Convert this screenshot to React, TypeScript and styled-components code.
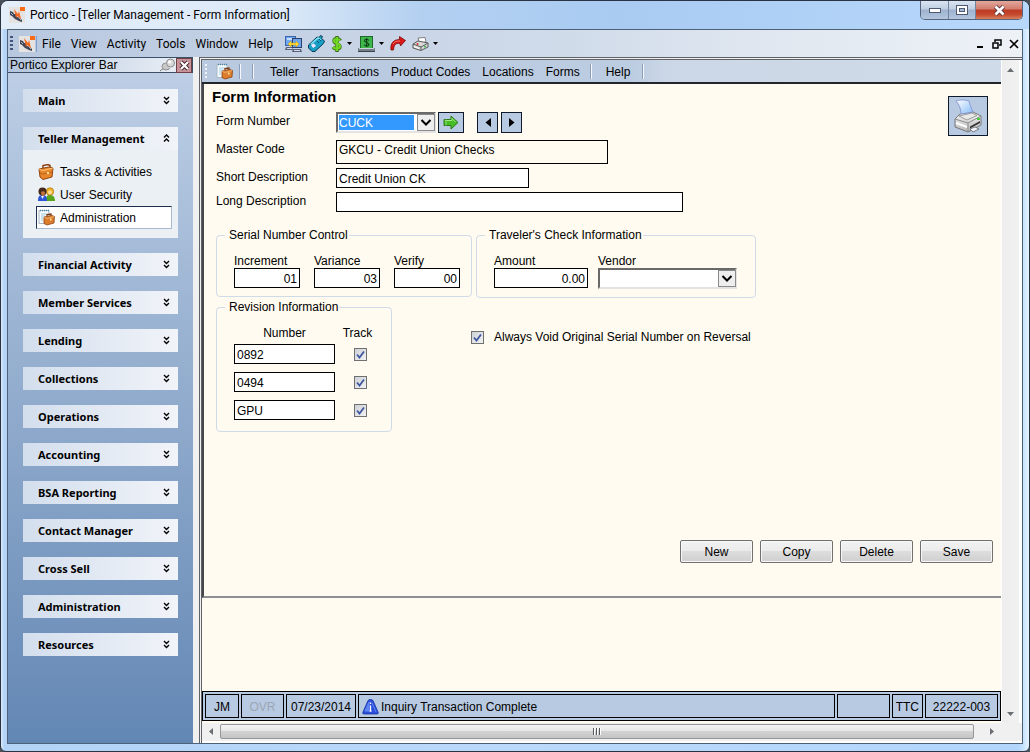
import React from "react";
import styled, { createGlobalStyle, css } from "styled-components";

const sans = '"Liberation Sans", Arial, sans-serif';
const ui = 'Roboto, "Segoe UI", sans-serif';
const panelBlue = "#b8cae1";
const cream = "#fffbf0";

const Global = createGlobalStyle`
  *, *::before, *::after { box-sizing: border-box; }
  html, body { margin: 0; background: #4a5058; }
  button, input, select { font: inherit; color: inherit; margin: 0; }
  button { padding: 0; cursor: default; }
`;

/* ---------- window frame ---------- */

const WindowFrame = styled.div`
  display: flex;
  flex-direction: column;
  min-height: 100vh;
  padding: 0 6px 7px;
  border: 1px solid #2a3340;
  border-radius: 8px 8px 6px 6px;
  background: linear-gradient(90deg, #dcebfb, #b3d3f7 3px, #bad9fb 50%, #b3d6fd 99%, #e4f3ff);
  color: #000;
  font: 12px/16px ${sans};
`;

const TitleBar = styled.header`
  display: flex;
  align-items: flex-start;
  height: 28px;
  margin: 0 -6px;
  padding: 0 6px 0 8px;
  border-radius: 7px 7px 0 0;
  background: linear-gradient(90deg, #e4eef9 0, #dce9f8 280px, #b3d0f1 420px, #a9cbf2 60%, #b8d8fb);
`;

const AppTitle = styled.h1`
  display: flex;
  flex: 1;
  align-items: center;
  gap: 5px;
  margin: 0;
  padding-top: 5px;
  font: 12px/18px ${ui};
`;

const WindowButtons = styled.div`
  display: flex;
  border: 1px solid #54657c;
  border-top: 0;
  border-radius: 0 0 5px 5px;
  overflow: hidden;
`;

const WindowButton = styled.button<{ $close?: boolean }>`
  display: grid;
  place-items: center;
  width: ${(p) => (p.$close ? 47 : 27)}px;
  height: 18px;
  border: 0;
  border-left: 1px solid #7184a0;
  background: ${(p) =>
    p.$close
      ? "linear-gradient(#e2a79c, #d17c6d 45%, #bd3b22 50%, #c4492e 75%, #d9805f)"
      : "linear-gradient(#dbe5f2, #bfcee2 45%, #9db2cf 50%, #b4c6de)"};
  &:first-child { border-left: 0; }
`;

const ClientArea = styled.div`
  display: flex;
  flex: 1;
  flex-direction: column;
  border: 1px solid #4c6078;
  background: #f0f0f0;
`;

/* ---------- main menu ---------- */

const MenuBar = styled.nav`
  display: flex;
  align-items: center;
  height: 27px;
  padding: 0 3px 0 2px;
  background: linear-gradient(90deg, #b8c8df, #d0dbea 55%, #e0e7f0 75%, #eef2f7);
  font: 12px/18px ${ui};
`;

const Grip = styled.span`
  width: 3px;
  height: 15px;
  background: repeating-linear-gradient(#40547c 0 2px, transparent 2px 4px);
`;

const MenuLogo = styled.span`
  display: flex;
  margin: 0 5px 0 6px;
  padding-right: 1px;
  border-right: 1px solid #7c9fd0;
`;

const MenuItems = styled.div`
  display: flex;
  gap: 10px;
  margin-right: 12px;
`;

const FlatButton = styled.button`
  display: flex;
  align-items: center;
  gap: 4px;
  border: 0;
  background: none;
`;

const ToolIcons = styled.div`
  display: flex;
  flex: 1;
  align-items: center;
  gap: 6px;
`;

const ChildControls = styled.div`
  display: flex;
  gap: 7px;
`;

/* ---------- explorer bar ---------- */

const Workspace = styled.div`
  display: flex;
  flex: 1;
  gap: 6px;
`;

const Explorer = styled.aside`
  display: flex;
  flex: 0 0 185px;
  flex-direction: column;
  background: linear-gradient(#bfd0e6, #6387b4);
`;

const ExplorerHeader = styled.div`
  display: flex;
  align-items: center;
  height: 16px;
  padding-left: 2px;
  border: 1px solid #3c5068;
  border-width: 1px 1px 1px 0;
  background: linear-gradient(90deg, #b3c5dd, #edf1f7);
`;

const ExplorerTitle = styled.h2`
  flex: 1;
  margin: 0;
  font: 12px/14px ${sans};
`;

const PanelClose = styled.button`
  display: grid;
  place-items: center;
  width: 16px;
  height: 15px;
  border: 1px solid #704048;
  background: #c79298;
`;

const Groups = styled.div`
  display: flex;
  flex-direction: column;
  gap: 15px;
  padding: 16px 15px;
`;

const GroupHeader = styled.button`
  display: flex;
  align-items: center;
  justify-content: space-between;
  width: 100%;
  height: 23px;
  padding: 0 8px 0 15px;
  border: 0;
  background: linear-gradient(90deg, #d3deed, #f1f4f9);
  font: bold 11px/23px "Noto Sans", Tahoma, sans-serif;
`;

const GroupBody = styled.div`
  padding: 10px 6px 9px 13px;
  background: #ebf0f5;
`;

const GroupLink = styled.a<{ $current?: boolean }>`
  display: flex;
  align-items: center;
  gap: 5px;
  height: 23px;
  padding-left: 1px;
  border: 1px solid transparent;
  color: #000;
  text-decoration: none;
  ${(p) =>
    p.$current &&
    css`
      border-color: #1c2f4c #a9b9d0 #a9b9d0 #1c2f4c;
      background: #fff;
    `}
`;

/* ---------- document ---------- */

const Mdi = styled.main`
  display: flex;
  flex: 1;
  min-width: 0;
  flex-direction: column;
  border: 3px double #5f6266;
  border-width: 3px 0 0 3px;
  background: #f0f0f0;
`;

const MdiMain = styled.div`
  display: flex;
  flex: 1;
`;

const Document = styled.div`
  display: flex;
  flex: 1;
  min-width: 0;
  flex-direction: column;
  background: ${cream};
`;

const DocToolbar = styled.nav`
  display: flex;
  align-items: center;
  height: 24px;
  padding: 1px 0 0 3px;
  border-bottom: 2px solid #22262c;
  background: linear-gradient(90deg, #b8c9e0, #bccce1 54%, #cbd7e6 58%, #d0dbe9);
`;

const DocGrip = styled.span`
  width: 2px;
  height: 15px;
  margin-right: 9px;
  background: repeating-linear-gradient(#eef3fa 0 2px, transparent 2px 4px);
`;

const Separator = styled.span`
  width: 2px;
  height: 15px;
  border-left: 1px solid #8b9db8;
  background: #f5f7fa;
`;

const DocIcon = styled.span`
  display: flex;
  margin-right: 6px;
`;

const DocMenu = styled.div<{ $tail?: boolean }>`
  display: flex;
  gap: 12px;
  margin: ${(p) => (p.$tail ? "0 12px 0 14px" : "0 10px 0 16px")};
`;

const SeparatorPair = styled.span`
  display: flex;
  gap: 11px;
`;

const FormPane = styled.form`
  display: flex;
  flex: 0 0 auto;
  flex-direction: column;
  padding: 0 8px 0 12px;
  border-left: 2px solid #44474c;
  border-bottom: 2px solid #8f9094;
`;

const FormTop = styled.div`
  display: flex;
  align-items: flex-start;
  justify-content: space-between;
  padding-right: 5px;
`;

const FormTitle = styled.h2`
  margin: 0 0 6px -4px;
  padding-top: 4px;
  font: bold 15px/18px ${sans};
`;

const Fields = styled.div`
  display: grid;
  grid-template-columns: 120px 1fr;
  row-gap: 4px;
`;

const FieldLabel = styled.label`
  line-height: 18px;
`;

const Pickers = styled.div`
  display: flex;
  gap: 2px;
  padding-bottom: 3px;
`;

const TextBox = styled.input<{ $w: number; $right?: boolean; $memo?: boolean }>`
  display: block;
  width: ${(p) => p.$w}px;
  height: ${(p) => (p.$memo ? 24 : 20)}px;
  padding: ${(p) => (p.$memo ? "0 2px 4px" : "2px 2px 0")};
  border: 1px solid #000;
  border-radius: 0;
  background: ${(p) => (p.$memo ? cream : "#fff")};
  text-align: ${(p) => (p.$right ? "right" : "left")};
`;

const SelectWrap = styled.span<{ $w: number }>`
  position: relative;
  display: block;
  width: ${(p) => p.$w}px;
  svg {
    position: absolute;
    top: 2px;
    right: 1px;
    pointer-events: none;
  }
`;

const SelectBox = styled.select<{ $active?: boolean }>`
  appearance: none;
  display: block;
  width: 100%;
  height: 21px;
  padding: 1px 20px 1px 1px;
  border: 2px solid;
  border-color: #696969 #e3e3e3 #e3e3e3 #696969;
  border-radius: 0;
  background: #fff;
  ${(p) =>
    p.$active &&
    css`
      color: #fff;
      background: linear-gradient(#3399ff, #3399ff) content-box, #fff;
    `}
`;

const IconButton = styled.button<{ $w: number; $h?: number }>`
  display: grid;
  place-items: center;
  width: ${(p) => p.$w}px;
  height: ${(p) => p.$h ?? 21}px;
  border: 1px solid #10182c;
  background: ${panelBlue};
`;

const StepButtons = styled.div`
  display: flex;
  gap: 3px;
  margin-left: 11px;
`;

const PrintButton = styled(IconButton)`
  margin-top: 12px;
`;

const BoxRow = styled.div<{ $first?: boolean }>`
  display: flex;
  align-items: flex-start;
  gap: 4px;
  margin-top: ${(p) => (p.$first ? 15 : 1)}px;
`;

const Box = styled.fieldset<{ $w: number; $bottom: number }>`
  width: ${(p) => p.$w}px;
  margin: 0;
  padding: 12px 0 ${(p) => p.$bottom}px 17px;
  border: 1px solid #d0dbe8;
  border-radius: 4px;
`;

const Legend = styled.legend`
  margin-left: -9px;
  padding: 0 1px 0 4px;
`;

const Columns = styled.div`
  display: flex;
  gap: 11px;
`;

const Column = styled.label<{ $w: number }>`
  display: block;
  width: ${(p) => p.$w}px;
  line-height: 13px;
`;

const CounterColumn = styled(Column)`
  margin-right: 4px;
`;

const RevisionTable = styled.table`
  border-collapse: collapse;
  th {
    padding: 0 0 5px;
    font-weight: normal;
    line-height: 12px;
  }
  td { padding: 0 0 8px; }
  td + td { padding-left: 19px; }
  th + th { width: 45px; }
`;

const CheckWrap = styled.span`
  position: relative;
  display: block;
  width: 13px;
  height: 13px;
  svg {
    position: absolute;
    top: 0;
    left: 0;
    pointer-events: none;
  }
`;

const CheckInput = styled.input`
  appearance: none;
  display: block;
  width: 13px;
  height: 13px;
  border: 1px solid #707070;
  background: linear-gradient(135deg, #cdd0d6, #f3f3f3);
`;

const VoidOption = styled.label`
  display: flex;
  align-items: center;
  gap: 10px;
  margin: 30px 0 0 75px;
`;

const Actions = styled.div`
  display: flex;
  justify-content: flex-end;
  gap: 7px;
  margin: 108px 0 33px;
`;

const ActionButton = styled.button`
  width: 73px;
  height: 23px;
  border: 1px solid #707070;
  border-radius: 2px;
  box-shadow: inset 0 0 0 1px #f8f8f8;
  background: linear-gradient(#f2f2f2, #ebebeb 49%, #dddddd 50%, #cfcfcf);
`;

const Spacer = styled.div`
  flex: 1;
  min-height: 20px;
`;

/* ---------- status bar ---------- */

const StatusBar = styled.footer`
  display: flex;
  gap: 2px;
  height: 30px;
  margin-bottom: 2px;
  padding: 2px;
  border: 1px solid #000;
  background: ${panelBlue};
`;

const StatusCell = styled.span<{ $w?: number; $dim?: boolean }>`
  display: flex;
  flex: ${(p) => (p.$w ? `0 0 ${p.$w}px` : "1 1 0")};
  align-items: center;
  justify-content: ${(p) => (p.$w ? "center" : "flex-start")};
  gap: 2px;
  padding: 2px 3px 0;
  border: 1px solid #000;
  color: ${(p) => (p.$dim ? "#9ba6b4" : "#000")};
  white-space: nowrap;
`;

/* ---------- scroll bars ---------- */

const VScroll = styled.div`
  display: flex;
  flex: 0 0 21px;
  flex-direction: column;
  justify-content: space-between;
  padding: 3px 4px 2px 5px;
  border-right: 3px solid #fff;
  background: linear-gradient(90deg, #fff 1px, #ededed 1px, #f2f2f2);
`;

const HScroll = styled.div`
  display: flex;
  align-items: center;
  height: 20px;
  padding: 0 26px 2px 4px;
  border-bottom: 2px solid #fff;
  background: #f0f0f0;
`;

const ScrollArrow = styled.button`
  display: grid;
  place-items: center;
  width: 9px;
  height: 14px;
  border: 0;
  background: none;
`;

const Thumb = styled.div`
  display: flex;
  flex: 1;
  align-items: center;
  justify-content: center;
  gap: 1px;
  height: 15px;
  margin: 0 13px 0 5px;
  border: 1px solid #979797;
  border-radius: 2px;
  background: linear-gradient(#f4f4f4, #e6e6e6 49%, #d2d2d3 50%, #c4c4c6);
  i {
    width: 2px;
    height: 7px;
    border-left: 1px solid #55585c;
    background: #fff;
  }
`;

/* ---------- icons ---------- */

const Logo = () => (
  <svg width="16" height="16" viewBox="0 0 16 16">
    <rect width="16" height="16" fill="#e5e3e2" />
    <path d="M1 4l3 1 1 2 2 0 1 3 3 1 2 2v2l-3-1-2-1-2-1-3-3-2-1z" fill="#3e4658" />
    <path d="M2 6l2 2M10 11l2 2" stroke="#a9b4c4" />
    <path d="M5 2l4 5 1-3 2 8-4-3-1 2z" fill="#f26a21" />
    <rect x="11" width="5" height="4" fill="#ff6a13" />
  </svg>
);

const Computers = () => (
  <svg width="17" height="16" viewBox="0 0 17 16">
    <rect x=".5" y=".5" width="10" height="9" fill="#6fa8f0" stroke="#3e63a8" />
    <path d="M2 2h7v2H2z" fill="#c4defa" />
    <rect x="7.5" y="2.5" width="9" height="9" fill="#6ba4ee" stroke="#2e3f68" />
    <path d="M1 11h6l1 3H0zM8 13h8l1 3H7z" fill="#59617a" />
    <path d="M2 12.500h5M9 14.500h6" stroke="#d5d9e2" />
    <path d="M3 8l3-3v2h5V5l3 3-3 3V9H6v2z" fill="#ffd934" stroke="#c29810" strokeWidth=".5" />
  </svg>
);

const Phone = () => (
  <svg width="17" height="17" viewBox="0 0 17 17">
    <path d="M.5 10L9 2l2 .5L12.500.5l2 1-1 2 3 2.500-1 2.500L7 16.500H4L.5 13z" fill="#1a9fc4" stroke="#0c3c58" />
    <path d="M3 9l7-6 3 2" fill="none" stroke="#7fe3f4" strokeWidth="1.5" />
    <path d="M3 10l3-1.500L8 11l-3 2z" fill="#f1e5ff" />
    <path d="M9 6l2 2M11 4l2 2" stroke="#0a4f70" />
  </svg>
);

const Dollar = () => (
  <svg width="12" height="16" viewBox="0 0 12 16">
    <path d="M9.500 4.500C8 2 3 2 3 5s6 2.500 6 5.500S4 14 2 11M6 0v16" fill="none" stroke="#3d6a18" strokeWidth="3.400" />
    <path d="M9 4.500C7.500 2.500 3 2.500 3 5s6 2.500 6 5.300S4 13.500 2 11M6 1v14" fill="none" stroke="#6fd622" strokeWidth="2.200" />
  </svg>
);

const Cash = () => (
  <svg width="17" height="16" viewBox="0 0 17 16">
    <rect x="2.500" y=".5" width="12" height="12" fill="#3fb54a" stroke="#1c6b2b" />
    <path d="M11 4.500C9.500 2.500 6.500 3 6.500 4.800s4.500 1.700 4.500 3.700-3.500 2-4.800.2M8.700 2v9" fill="none" stroke="#0b3d16" strokeWidth="1.100" />
    <path d="M0 12h17v3H0z" fill="#73808a" />
    <path d="M1 12.500h15" stroke="#c9d3d8" />
    <path d="M0 15.500h17" stroke="#39434b" />
  </svg>
);

const Share = () => (
  <svg width="16" height="15" viewBox="0 0 16 15">
    <path d="M1 14C0 7 4 3.500 9.500 3.500V.5l6 4-5 5.500-.5-2.500C6 7 4 8 3.500 14z" fill="#d81818" stroke="#7c0a0a" strokeWidth=".8" />
    <path d="M3 8c2-3 5-3 7-3" fill="none" stroke="#ff7a6c" />
  </svg>
);

const SmallPrinter = () => (
  <svg width="17" height="14" viewBox="0 0 17 14">
    <path d="M6 1l7-.5 1 4-6 3z" fill="#fff" stroke="#666" strokeWidth=".8" />
    <path d="M1 7l5-3 10 2v4l-7 3.500L1 11z" fill="#d9dad8" stroke="#4b4b4b" strokeWidth=".9" />
    <path d="M1 7l8 3 7-4M9 10v3" fill="none" stroke="#5a5a5a" />
    <path d="M2 9l5 2v1L2 10z" fill="#fff" />
    <circle cx="5.500" cy="7" r="1" fill="#d92c2c" />
    <circle cx="13" cy="9.500" r="1" fill="#31b044" />
  </svg>
);

const Caret = () => (
  <svg width="5" height="3" viewBox="0 0 5 3"><path d="M0 0h5L2.500 3z" /></svg>
);

const Pin = () => (
  <svg width="16" height="14" viewBox="0 0 16 14">
    <path d="M0 13l5-4" stroke="#777" />
    <ellipse cx="6" cy="8.500" rx="4" ry="3.500" fill="#c9c9c9" stroke="#8d8d8d" />
    <path d="M7 4l4 5" stroke="#e6e6e6" strokeWidth="4" />
    <circle cx="10.500" cy="5" r="4" fill="#dadada" stroke="#8c8c8c" />
    <circle cx="9.500" cy="4" r="1.500" fill="#fff" />
  </svg>
);

const Chevrons = ({ up }: { up?: boolean }) => (
  <svg width="7" height="9" viewBox="0 0 7 9">
    <path
      d={up ? "M1 3.500L3.500 1 6 3.500M1 7.500L3.500 5 6 7.500" : "M1 1L3.500 3.500 6 1M1 5L3.500 7.500 6 5"}
      fill="none"
      stroke="#000"
      strokeWidth="1.400"
    />
  </svg>
);

const Briefcase = () => (
  <svg width="17" height="16" viewBox="0 0 17 16">
    <path d="M5 4V1.500l5-1 2 1V4" fill="none" stroke="#8e3e10" strokeWidth="1.500" />
    <path d="M1 5l10-2 4 1-1 9-9 2.500L2 13z" fill="#e8862a" stroke="#934511" />
    <path d="M1 5l4 1.500L15 4" fill="none" stroke="#ffc47c" />
    <path d="M2 9l3 1 9.500-2" fill="none" stroke="#b05a18" strokeWidth=".8" />
    <path d="M9 8h2v2H9z" fill="#ffe08a" />
  </svg>
);

const Users = () => (
  <svg width="17" height="15" viewBox="0 0 17 15">
    <path d="M8 14c0-5 1-6 4-6s5 2 5 6z" fill="#57a51c" />
    <circle cx="12" cy="4.500" r="3.700" fill="#f1b72c" stroke="#a76d0d" strokeWidth=".7" />
    <circle cx="12" cy="5.500" r="2" fill="#ffd998" />
    <path d="M0 14c0-4 1-6 4.500-6S9 10 9 14z" fill="#2a56d4" />
    <circle cx="4.500" cy="4.500" r="4" fill="#45291a" />
    <path d="M3 5c1-1 3-1 4 0 0 3-1 4-2 4S3 8 3 5z" fill="#c2703a" />
    <path d="M3 9l1.500 3L6 9z" fill="#e9f1ff" />
  </svg>
);

const AdminIcon = () => (
  <svg width="17" height="17" viewBox="0 0 17 17">
    <path d="M1 1.500h10v13H1z" fill="#f4fafd" stroke="#a7b7c2" />
    <path d="M2 1.500h9" stroke="#4b88a8" strokeDasharray="1 1" strokeWidth="1.500" />
    <path d="M3 5h6M3 7h4M3 9h2M3 11h2" stroke="#a3cbe0" />
    <path d="M9 7V5.500l4-.5V7" fill="none" stroke="#7c3a12" strokeWidth="1.300" />
    <path d="M6 8l8-1.500 2.500 1L16 14l-7 2-3-1.500z" fill="#db7d2c" stroke="#8e4310" strokeWidth=".8" />
    <path d="M6 8l3 1.500 7-2" fill="none" stroke="#f8ba76" strokeWidth=".8" />
    <path d="M12 9.500h1.500v2H12z" fill="#ffe596" />
  </svg>
);

const DropArrow = () => (
  <svg width="18" height="17" viewBox="0 0 18 17">
    <rect x=".5" y=".5" width="17" height="16" fill="#eee" stroke="#8a8a8a" />
    <path d="M4.500 6L9 10.500 13.500 6" fill="none" stroke="#000" strokeWidth="2" />
  </svg>
);

const GoArrow = () => (
  <svg width="16" height="15" viewBox="0 0 16 15">
    <path d="M1 4.500h7V1l7 6.500L8 14v-3.500H1z" fill="#46bd24" stroke="#2b7a18" />
    <path d="M2 5.500h7V3.500l3.500 3.500" fill="none" stroke="#a4ec83" />
    <path d="M3 4.500v6" stroke="#8ad86d" />
  </svg>
);

const Triangle = ({ right }: { right?: boolean }) => (
  <svg width="6" height="9" viewBox="0 0 6 9"><path d={right ? "M0 0l5.500 4.500L0 9z" : "M6 0L.5 4.500 6 9z"} /></svg>
);

const Tick = () => (
  <svg width="13" height="13" viewBox="0 0 13 13">
    <path d="M3 6.500l2.500 3L10 3.500" fill="none" stroke="#3f56a0" strokeWidth="1.800" />
  </svg>
);

const Printer = () => (
  <svg width="30" height="34" viewBox="0 0 30 34">
    <defs>
      <linearGradient id="sheet" x1="0" y1="0" x2="1" y2="1">
        <stop offset="0" stopColor="#fff" />
        <stop offset="1" stopColor="#86bbf8" />
      </linearGradient>
      <linearGradient id="shell" x1="0" y1="0" x2="0" y2="1">
        <stop offset="0" stopColor="#fafafa" />
        <stop offset="1" stopColor="#b5b5b5" />
      </linearGradient>
    </defs>
    <path d="M2 20l5-5 13-2 8 4v9l-13 7L2 28z" fill="url(#shell)" stroke="#777" />
    <path d="M2 20l13 4 13-7M15 24v8" fill="none" stroke="#8a8a8a" />
    <path d="M6 17l13-3 5 2.500-10 4.500z" fill="#e9e9e9" stroke="#9b9b9b" />
    <path d="M3 2c4-1.500 9-1.500 13 0 1 4 2 7 4 11L8 15C8 10 6 5 3 2z" fill="url(#sheet)" stroke="#7d8fd0" strokeWidth=".8" />
    <path d="M3 24l11 4" stroke="#fff" strokeWidth="2" />
    <path d="M17 27.500l10-5.500v2l-10 5.500z" fill="#333" />
    <path d="M17 30l5-2 4 2-6 3z" fill="#f3f3ff" stroke="#555" strokeWidth=".7" />
    <path d="M24 19h3v2h-3z" fill="#45cf3b" />
  </svg>
);

const Alert = () => (
  <svg width="17" height="16" viewBox="0 0 17 16">
    <path d="M6 1.500Q8.500-1 11 1.500L16 13q1 2-1 2H2q-2 0-1-2z" fill="#2c50dd" stroke="#1733a0" strokeWidth=".8" />
    <path d="M7 3l-4 9h4zM10 4l4 9" fill="#5f86f2" stroke="#5f86f2" />
    <path d="M8.500 3.500v1.500M8.500 6.500V12M7.500 12h2" stroke="#fff" strokeWidth="1.300" />
  </svg>
);

const ArrowGlyph = ({ d, w, h }: { d: string; w: number; h: number }) => (
  <svg width={w} height={h} viewBox={`0 0 ${w} ${h}`}><path d={d} fill="#6a6d72" /></svg>
);

/* ---------- content ---------- */

const groups = [
  "Main", "Teller Management", "Financial Activity", "Member Services", "Lending", "Collections",
  "Operations", "Accounting", "BSA Reporting", "Contact Manager", "Cross Sell", "Administration", "Resources",
];

const Check = ({ label, id }: { label?: string; id?: string }) => (
  <CheckWrap>
    <CheckInput type="checkbox" id={id} aria-label={label} defaultChecked />
    <Tick />
  </CheckWrap>
);

const Counter = ({ name, value }: { name: string; value: string }) => (
  <CounterColumn $w={65}>
    {name}
    <TextBox $w={66} $right defaultValue={value} />
  </CounterColumn>
);

export default function App() {
  return (
    <>
      <Global />
      <WindowFrame>
        <TitleBar>
          <AppTitle><Logo />Portico - [Teller Management - Form Information]</AppTitle>
          <WindowButtons>
            <WindowButton aria-label="Minimize">
              <svg width="12" height="5"><rect x=".5" y=".5" width="11" height="4" fill="#fff" stroke="#4e5b70" /></svg>
            </WindowButton>
            <WindowButton aria-label="Maximize">
              <svg width="12" height="11">
                <rect x=".5" y=".5" width="11" height="9" fill="#fff" stroke="#4e5b70" />
                <rect x="3.500" y="3.500" width="5" height="3" fill="#a6bad6" stroke="#4e5b70" />
              </svg>
            </WindowButton>
            <WindowButton $close aria-label="Close">
              <svg width="13" height="11">
                <path d="M2.500 1.500l8 8M10.500 1.500l-8 8" stroke="#5b3038" strokeWidth="4.500" />
                <path d="M2.500 1.500l8 8M10.500 1.500l-8 8" stroke="#fff" strokeWidth="2.700" />
              </svg>
            </WindowButton>
          </WindowButtons>
        </TitleBar>

        <ClientArea>
          <MenuBar>
            <Grip />
            <MenuLogo><Logo /></MenuLogo>
            <MenuItems>
              {["File", "View", "Activity", "Tools", "Window", "Help"].map((m) => (
                <FlatButton key={m}>{m}</FlatButton>
              ))}
            </MenuItems>
            <ToolIcons>
              <FlatButton aria-label="Connection"><Computers /></FlatButton>
              <FlatButton aria-label="Phone"><Phone /></FlatButton>
              <FlatButton aria-label="Payments"><Dollar /><Caret /></FlatButton>
              <FlatButton aria-label="Cash drawer"><Cash /><Caret /></FlatButton>
              <FlatButton aria-label="Forward"><Share /></FlatButton>
              <FlatButton aria-label="Print"><SmallPrinter /><Caret /></FlatButton>
            </ToolIcons>
            <ChildControls>
              <FlatButton aria-label="Minimize form">
                <svg width="10" height="10"><path d="M2 8h6" stroke="#000" strokeWidth="2" /></svg>
              </FlatButton>
              <FlatButton aria-label="Restore form">
                <svg width="10" height="10">
                  <path d="M3 3V1h6v5H7" fill="none" stroke="#000" strokeWidth="1.500" />
                  <path d="M1 4h5v5H1z" fill="none" stroke="#000" strokeWidth="1.500" />
                </svg>
              </FlatButton>
              <FlatButton aria-label="Close form">
                <svg width="10" height="10"><path d="M1 1l8 8M9 1L1 9" stroke="#000" strokeWidth="1.600" /></svg>
              </FlatButton>
            </ChildControls>
          </MenuBar>

          <Workspace>
            <Explorer>
              <ExplorerHeader>
                <ExplorerTitle>Portico Explorer Bar</ExplorerTitle>
                <FlatButton aria-label="Pin"><Pin /></FlatButton>
                <PanelClose aria-label="Close explorer bar">
                  <svg width="11" height="11">
                    <path d="M2 2l7 7M9 2L2 9" stroke="#402028" strokeWidth="4" />
                    <path d="M2 2l7 7M9 2L2 9" stroke="#fff" strokeWidth="2.200" />
                  </svg>
                </PanelClose>
              </ExplorerHeader>
              <Groups>
                {groups.map((g) => {
                  const open = g === "Teller Management";
                  return (
                    <div key={g}>
                      <GroupHeader aria-expanded={open}>{g}<Chevrons up={open} /></GroupHeader>
                      {open && (
                        <GroupBody>
                          <GroupLink href="#tasks"><Briefcase />Tasks &amp; Activities</GroupLink>
                          <GroupLink href="#security"><Users />User Security</GroupLink>
                          <GroupLink href="#admin" $current><AdminIcon />Administration</GroupLink>
                        </GroupBody>
                      )}
                    </div>
                  );
                })}
              </Groups>
            </Explorer>

            <Mdi>
              <MdiMain>
                <Document>
                  <DocToolbar>
                    <DocGrip />
                    <DocIcon><AdminIcon /></DocIcon>
                    <SeparatorPair><Separator /><Separator /></SeparatorPair>
                    <DocMenu>
                      {["Teller", "Transactions", "Product Codes", "Locations", "Forms"].map((m) => (
                        <FlatButton key={m}>{m}</FlatButton>
                      ))}
                    </DocMenu>
                    <Separator />
                    <DocMenu $tail><FlatButton>Help</FlatButton></DocMenu>
                    <Separator />
                  </DocToolbar>

                  <FormPane onSubmit={(e) => e.preventDefault()}>
                    <FormTop>
                      <div>
                        <FormTitle>Form Information</FormTitle>
                        <Fields>
                          <FieldLabel htmlFor="number">Form Number</FieldLabel>
                          <Pickers>
                            <SelectWrap $w={100}>
                              <SelectBox id="number" $active><option>CUCK</option></SelectBox>
                              <DropArrow />
                            </SelectWrap>
                            <IconButton type="button" $w={26} aria-label="Go"><GoArrow /></IconButton>
                            <StepButtons>
                              <IconButton type="button" $w={21} aria-label="Previous"><Triangle /></IconButton>
                              <IconButton type="button" $w={21} aria-label="Next"><Triangle right /></IconButton>
                            </StepButtons>
                          </Pickers>
                          <FieldLabel htmlFor="master">Master Code</FieldLabel>
                          <TextBox id="master" $w={272} $memo readOnly value="GKCU - Credit Union Checks" />
                          <FieldLabel htmlFor="short">Short Description</FieldLabel>
                          <TextBox id="short" $w={193} defaultValue="Credit Union CK" />
                          <FieldLabel htmlFor="long">Long Description</FieldLabel>
                          <TextBox id="long" $w={347} />
                        </Fields>
                      </div>
                      <PrintButton type="button" $w={40} $h={40} aria-label="Print form"><Printer /></PrintButton>
                    </FormTop>

                    <BoxRow $first>
                      <Box $w={256} $bottom={8}>
                        <Legend>Serial Number Control</Legend>
                        <Columns>
                          <Counter name="Increment" value="01" />
                          <Counter name="Variance" value="03" />
                          <Counter name="Verify" value="00" />
                        </Columns>
                      </Box>
                      <Box $w={280} $bottom={8}>
                        <Legend>Traveler's Check Information</Legend>
                        <Columns>
                          <Column $w={93}>
                            Amount
                            <TextBox $w={94} $right defaultValue="0.00" />
                          </Column>
                          <Column $w={139}>
                            Vendor
                            <SelectWrap $w={139}>
                              <SelectBox><option /></SelectBox>
                              <DropArrow />
                            </SelectWrap>
                          </Column>
                        </Columns>
                      </Box>
                    </BoxRow>

                    <BoxRow>
                      <Box $w={176} $bottom={3}>
                        <Legend>Revision Information</Legend>
                        <RevisionTable>
                          <thead><tr><th>Number</th><th>Track</th></tr></thead>
                          <tbody>
                            {["0892", "0494", "GPU"].map((n) => (
                              <tr key={n}>
                                <td><TextBox $w={101} defaultValue={n} aria-label="Number" /></td>
                                <td><Check label={`Track ${n}`} /></td>
                              </tr>
                            ))}
                          </tbody>
                        </RevisionTable>
                      </Box>
                      <VoidOption>
                        <Check />
                        Always Void Original Serial Number on Reversal
                      </VoidOption>
                    </BoxRow>

                    <Actions>
                      {["New", "Copy", "Delete", "Save"].map((a) => (
                        <ActionButton key={a} type="button">{a}</ActionButton>
                      ))}
                    </Actions>
                  </FormPane>
                  <Spacer />
                  <StatusBar>
                    <StatusCell $w={34}>JM</StatusCell>
                    <StatusCell $w={43} $dim>OVR</StatusCell>
                    <StatusCell $w={70}>07/23/2014</StatusCell>
                    <StatusCell><Alert />Inquiry Transaction Complete</StatusCell>
                    <StatusCell $w={53} />
                    <StatusCell $w={30}>TTC</StatusCell>
                    <StatusCell $w={73}>22222-003</StatusCell>
                  </StatusBar>
                </Document>
                <VScroll>
                  <ScrollArrow aria-label="Scroll up"><ArrowGlyph w={7} h={4} d="M0 4h7L3.500 0z" /></ScrollArrow>
                  <ScrollArrow aria-label="Scroll down"><ArrowGlyph w={7} h={4} d="M0 0h7L3.500 4z" /></ScrollArrow>
                </VScroll>
              </MdiMain>
              <HScroll>
                <ScrollArrow aria-label="Scroll left"><ArrowGlyph w={4} h={7} d="M4 0v7L0 3.500z" /></ScrollArrow>
                <Thumb><i /><i /><i /></Thumb>
                <ScrollArrow aria-label="Scroll right"><ArrowGlyph w={4} h={7} d="M0 0v7l4-3.500z" /></ScrollArrow>
              </HScroll>
            </Mdi>
          </Workspace>
        </ClientArea>
      </WindowFrame>
    </>
  );
}
